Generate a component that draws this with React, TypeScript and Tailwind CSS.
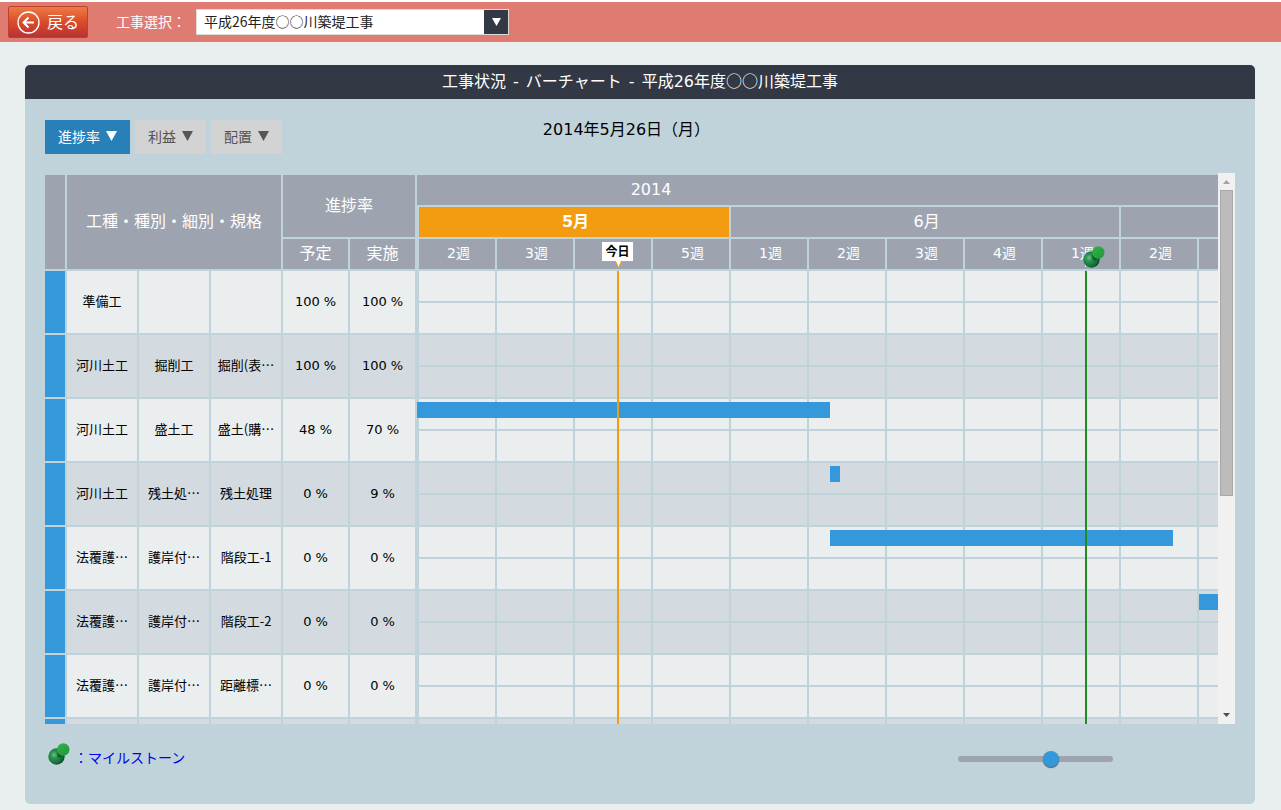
import React, { useState } from 'react';
import { clsx } from 'clsx';

interface Task {
  names: [string, string, string];
  planned: number;
  actual: number;
  // start / length of the bar in pixels from the left of the chart
  bar?: { start: number; length: number };
}

interface Month {
  label: string;
  weeks: string[];
  current?: boolean;
}

const ROW_HEIGHT = 64;
const HEADER_HEIGHT = 96;

// the week that holds today has no label, the tag takes its place
const months: Month[] = [
  { label: '5月', weeks: ['2週', '3週', '', '5週'], current: true },
  { label: '6月', weeks: ['1週', '2週', '3週', '4週', '1週'] },
  { label: '', weeks: ['2週', '', '', ''] },
];

const weeks = months.flatMap((month) => month.weeks);

const tasks: Task[] = [
  { names: ['準備工', '', ''], planned: 100, actual: 100 },
  { names: ['河川土工', '掘削工', '掘削(表…'], planned: 100, actual: 100 },
  { names: ['河川土工', '盛土工', '盛土(購…'], planned: 48, actual: 70, bar: { start: 0, length: 413 } },
  { names: ['河川土工', '残土処…', '残土処理'], planned: 0, actual: 9, bar: { start: 413, length: 10 } },
  { names: ['法覆護…', '護岸付…', '階段工-1'], planned: 0, actual: 0, bar: { start: 413, length: 343 } },
  { names: ['法覆護…', '護岸付…', '階段工-2'], planned: 0, actual: 0, bar: { start: 782, length: 120 } },
  { names: ['法覆護…', '護岸付…', '距離標…'], planned: 0, actual: 0 },
  { names: ['', '', ''], planned: 0, actual: 0 },
];

const cell = 'border-r-2 border-b-2 border-[#c0d3da]';
const headCell = 'bg-[#9da4b0] font-normal text-white';

const PinIcon: React.FC<{ id: string }> = ({ id }) => (
  <svg width="22" height="22" viewBox="0 0 22 22" aria-hidden="true">
    <defs>
      <radialGradient id={`${id}-ball`} cx="0.35" cy="0.4" r="0.65">
        <stop offset="0" stopColor="#6fc08a" />
        <stop offset="0.3" stopColor="#2c9650" />
        <stop offset="0.75" stopColor="#17733b" />
        <stop offset="1" stopColor="#07502c" />
      </radialGradient>
      <linearGradient id={`${id}-head`} x1="0" y1="0" x2="1" y2="1">
        <stop offset="0" stopColor="#33b04a" />
        <stop offset="1" stopColor="#1f983c" />
      </linearGradient>
    </defs>
    <path d="M2 18 L5 19 L2 21 Z" fill="#e8eeee" />
    <circle cx="8.5" cy="13.5" r="8.2" fill={`url(#${id}-ball)`} />
    <path d="M9 9 L14 13 Q12 16 9.5 13 Z" fill="#07502c" opacity="0.8" />
    <circle cx="15.3" cy="6.5" r="6.2" fill={`url(#${id}-head)`} />
  </svg>
);

const Header: React.FC = () => (
  <header className="flex h-[42px] items-center border-t-2 border-white bg-[#df7b71] pl-2">
    <button className="flex h-8 w-20 items-center gap-[7px] rounded-xs border border-[#c0402c] bg-linear-to-b from-[#e97b45] via-[#dc4a28] via-50% to-[#b63434] pb-[2px] pl-2 text-base text-white">
      <svg className="mt-[2px]" width="23" height="23" viewBox="0 0 23 23" fill="none" stroke="white" aria-hidden="true">
        <circle cx="11.5" cy="11.5" r="10.5" strokeWidth="1.3" />
        <path d="M17 11.5 H6.5 M11.5 6.5 L6.5 11.5 L11.5 16.5" strokeWidth="2" />
      </svg>
      戻る
    </button>
    <label htmlFor="project" className="ml-7 pb-[3px] text-sm text-white">工事選択：</label>
    <div className="relative ml-[10px] h-[26px] w-[313px]">
      <select
        id="project"
        className="block h-full w-full appearance-none border border-[#d8dcdc] bg-white px-[7px] pb-[3px] text-sm leading-5 text-[#222]"
      >
        <option>平成26年度○○川築堤工事</option>
      </select>
      <span className="pointer-events-none absolute inset-y-px right-px flex w-6 items-center justify-center bg-[#323844]">
        <svg width="9" height="8" viewBox="0 0 9 8" aria-hidden="true">
          <path d="M0 0 H9 L4.5 8 Z" fill="white" />
        </svg>
      </span>
    </div>
  </header>
);

const Tabs: React.FC = () => {
  const [active, setActive] = useState('進捗率');

  return (
    <div className="flex gap-[5px]">
      {['進捗率', '利益', '配置'].map((name) => (
        <button
          key={name}
          onClick={() => setActive(name)}
          className={clsx(
            'flex h-[34px] items-center gap-[6px] px-[13px] pb-[3px] text-sm',
            name === active ? 'bg-[#2980b9] text-white' : 'bg-[#d3d3d3] text-[#555]'
          )}
        >
          {name}
          <svg width="11" height="10" viewBox="0 0 11 10" fill="currentColor" aria-hidden="true">
            <path d="M0 0 H11 L5.5 10 Z" />
          </svg>
        </button>
      ))}
    </div>
  );
};

const TaskTable: React.FC = () => (
  <table className="w-[372px] shrink-0 table-fixed border-separate border-spacing-0 text-center">
    <colgroup>
      <col className="w-[22px]" />
      <col className="w-[72px]" />
      <col className="w-[72px]" />
      <col className="w-[72px]" />
      <col className="w-[67px]" />
      <col className="w-[67px]" />
    </colgroup>
    <thead className="text-base leading-6">
      <tr className="h-16">
        <th rowSpan={2} className={clsx(cell, headCell)} />
        <th rowSpan={2} colSpan={3} className={clsx(cell, headCell, 'pb-1')}>工種・種別・細別・規格</th>
        <th colSpan={2} className={clsx(cell, headCell, 'pb-1')}>進捗率</th>
      </tr>
      <tr className="h-8">
        <th className={clsx(cell, headCell, 'pb-1')}>予定</th>
        <th className={clsx(cell, headCell, 'pb-1')}>実施</th>
      </tr>
    </thead>
    <tbody className="text-[13px] text-black">
      {tasks.map((task, i) => (
        <tr key={i} className={clsx('h-16', i % 2 ? 'bg-[#d3dbe1]' : 'bg-[#eaeeef]')}>
          <td className={clsx(cell, 'bg-[#3498db]')} />
          {task.names.map((name, j) => (
            <td key={j} className={clsx(cell, 'pb-[2px] whitespace-nowrap')}>{name}</td>
          ))}
          <td className={clsx(cell, "font-['DejaVu_Sans',sans-serif]")}>{task.names[0] && `${task.planned} %`}</td>
          <td className={clsx(cell, "font-['DejaVu_Sans',sans-serif]")}>{task.names[0] && `${task.actual} %`}</td>
        </tr>
      ))}
    </tbody>
  </table>
);

const BarChart: React.FC = () => (
  <div className="relative min-w-0 flex-1 overflow-hidden font-['DejaVu_Sans','Noto_Sans_CJK_JP',sans-serif]">
    <table className="w-[1016px] table-fixed border-separate border-spacing-0 text-center">
      <colgroup>
        <col className="w-[2px]" />
        {weeks.map((_, i) => <col key={i} className="w-[78px]" />)}
      </colgroup>
      <thead>
        <tr className="h-8 text-base">
          <th colSpan={weeks.length + 1} className={clsx(cell, headCell)}>
            <span className="block w-[468px] leading-6">2014</span>
          </th>
        </tr>
        <tr className="h-8 text-base">
          <th className="p-0" />
          {months.map((month, i) => (
            <th
              key={i}
              colSpan={month.weeks.length}
              className={clsx(cell, 'pl-[3px] leading-6 text-white', month.current ? 'bg-[#f39c12] font-bold' : 'bg-[#9da4b0] font-normal')}
            >
              {month.label}
            </th>
          ))}
        </tr>
        <tr className="h-8 text-sm">
          <th className="p-0" />
          {weeks.map((week, i) => (
            <th key={i} className={clsx(cell, headCell, 'pb-[2px] pl-[3px]')}>{week}</th>
          ))}
        </tr>
      </thead>
      <tbody>
        {tasks.flatMap((_, i) =>
          ['plan', 'result'].map((kind) => (
            <tr key={`${i}-${kind}`} className="h-8">
              <td className="p-0" />
              {weeks.map((_, j) => (
                <td key={j} className={clsx(cell, i % 2 ? 'bg-[#d3dbe1]' : 'bg-[#eaeeef]')} />
              ))}
            </tr>
          ))
        )}
      </tbody>
    </table>

    {tasks.map((task, i) => task.bar && (
      <div
        key={i}
        className="absolute h-4 bg-[#3498db]"
        style={{ left: task.bar.start, width: task.bar.length, top: HEADER_HEIGHT + i * ROW_HEIGHT + 3 }}
      />
    ))}

    {/* today */}
    <div className="absolute top-24 bottom-0 left-[200px] w-[2px] bg-[#f39c12]" />
    <div className="absolute top-[66px] left-[184px] flex h-[21px] w-[33px] items-center justify-center border border-[#f39c12] bg-white text-xs font-bold whitespace-nowrap text-black">
      今日
      <svg className="absolute top-[19px] left-[13px]" width="7" height="8" viewBox="0 0 7 8" aria-hidden="true">
        <path d="M0.5 0 L3.5 7 L6.5 0" fill="white" stroke="#f39c12" />
      </svg>
    </div>

    {/* milestone */}
    <div className="absolute top-24 bottom-0 left-[668px] w-[2px] bg-[#228b22]" />
    <div className="absolute top-[71px] left-[666px]">
      <PinIcon id="milestone" />
    </div>
  </div>
);

const ScrollBar: React.FC = () => (
  <div className="flex w-[17px] shrink-0 flex-col items-center bg-[#f1f1f1]">
    <div className="flex h-[17px] items-center">
      <svg width="7" height="4" viewBox="0 0 7 4" aria-hidden="true"><path d="M3.5 0 L7 4 H0 Z" fill="#a3a3a3" /></svg>
    </div>
    <div className="h-[306px] w-[13px] border border-[#a8a8a8] bg-[#bcbcbc]" />
    <div className="mt-auto flex h-[18px] items-center">
      <svg width="7" height="4" viewBox="0 0 7 4" aria-hidden="true"><path d="M0 0 H7 L3.5 4 Z" fill="#505050" /></svg>
    </div>
  </div>
);

const App: React.FC = () => {
  const [scale, setScale] = useState(61);

  return (
    <div className="min-h-screen bg-[#e9eeee] pb-[6px] font-['Noto_Sans_CJK_JP','DejaVu_Sans',sans-serif]">
      <Header />
      <main className="mt-[23px] mr-[26px] ml-[25px] overflow-hidden rounded-[5px] bg-[#c0d3da]">
        <h1 className="h-[34px] bg-[#323844] pt-[3px] text-center font-['DejaVu_Sans','Noto_Sans_CJK_JP',sans-serif] text-base leading-6 text-white">
          工事状況 <span className="mx-[2px]">-</span> バーチャート <span className="mx-[2px]">-</span>{' '}
          平成26年度<span className="font-['Noto_Sans_CJK_JP',sans-serif]">○○</span>川築堤工事
        </h1>
        <div className="px-5">
          <div className="flex items-start pt-[21px]">
            <Tabs />
            <p className="flex-1 pr-[264px] text-center font-['DejaVu_Sans','Noto_Sans_CJK_JP',sans-serif] text-base leading-5 text-black">
              2014年5月26日（月）
            </p>
          </div>

          <div className="mt-[19px] flex h-[551px] overflow-hidden">
            <div className="mt-[2px] flex min-w-0 flex-1 overflow-hidden">
              <TaskTable />
              <BarChart />
            </div>
            <ScrollBar />
          </div>

          <div className="flex h-20 items-start justify-between pt-[19px] pr-[122px] pl-[3px]">
            <div className="flex items-start gap-1">
              <PinIcon id="legend" />
              <a href="#milestone" className="text-sm leading-7 text-[#0000ee]">：マイルストーン</a>
            </div>
            <input
              type="range"
              aria-label="表示倍率"
              value={scale}
              onChange={(e) => setScale(Number(e.target.value))}
              className="mt-[13px] h-[6px] w-[155px] appearance-none rounded-full bg-[#9da4b0] [&::-webkit-slider-thumb]:size-4 [&::-webkit-slider-thumb]:appearance-none [&::-webkit-slider-thumb]:rounded-full [&::-webkit-slider-thumb]:bg-[#3498db] [&::-webkit-slider-thumb]:shadow-[0_1px_1px_#555]"
            />
          </div>
        </div>
      </main>
    </div>
  );
};

export default App;
